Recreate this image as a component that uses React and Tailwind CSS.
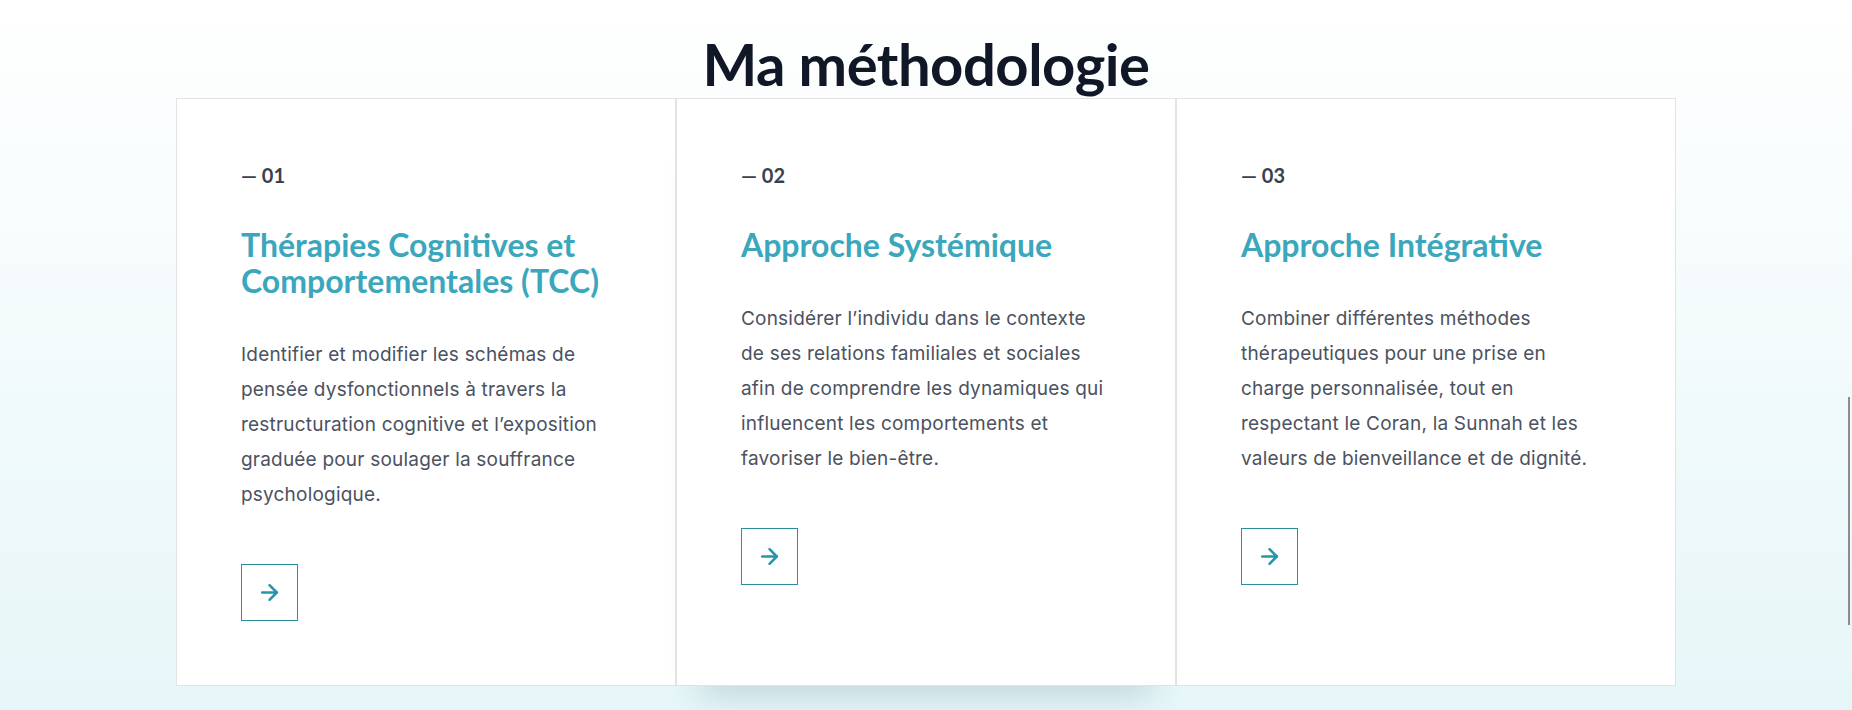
import { ArrowRight } from "lucide-react";

const METHODS = [
  {
    id: "01",
    title: ["Thérapies Cognitives et", "Comportementales (TCC)"],
    lines: [
      "Identifier et modifier les schémas de",
      "pensée dysfonctionnels à travers la",
      "restructuration cognitive et l’exposition",
      "graduée pour soulager la souffrance",
      "psychologique.",
    ],
  },
  {
    id: "02",
    title: ["Approche Systémique"],
    lines: [
      "Considérer l’individu dans le contexte",
      "de ses relations familiales et sociales",
      "afin de comprendre les dynamiques qui",
      "influencent les comportements et",
      "favoriser le bien-être.",
    ],
    raised: true,
  },
  {
    id: "03",
    title: ["Approche Intégrative"],
    lines: [
      "Combiner différentes méthodes",
      "thérapeutiques pour une prise en",
      "charge personnalisée, tout en",
      "respectant le Coran, la Sunnah et les",
      "valeurs de bienveillance et de dignité.",
    ],
  },
];

function MethodCard({ method }) {
  return (
    <div
      className={`bg-white border border-[#e3e3e3] px-16 pt-[62px] pb-16 flex flex-col items-start ${
        method.raised ? "shadow-[0_34px_30px_-24px_rgba(60,110,120,0.22)] relative z-10" : ""
      }`}
    >
      <div className="font-['Lato',sans-serif] font-bold text-[20px] leading-[28px] text-[#374151] mb-[38px]">
        — {method.id}
      </div>
      <h3 className="font-['Lato',sans-serif] font-bold text-[32px] leading-[36px] text-[#3aa7bc] mb-[38px]">
        {method.title.map((t, i) => (
          <span key={i} className="block">
            {t}
          </span>
        ))}
      </h3>
      <p className="font-['Inter',sans-serif] text-[19px] leading-[35px] tracking-[0.2px] text-[#4b5260]">
        {method.lines.map((l, i) => (
          <span key={i} className="block whitespace-nowrap">
            {l}
          </span>
        ))}
      </p>
      <button className="mt-[52px] w-[57px] h-[57px] border border-[#2b8fa0] flex items-center justify-center text-[#2596a8]">
        <ArrowRight size={25} strokeWidth={2.4} />
      </button>
    </div>
  );
}

export default function App() {
  return (
    <div className="relative min-h-[710px] bg-gradient-to-b from-white to-[#e6f6f8] pb-8">
      <div className="pt-[30px] flex flex-col items-center">
        <h2 className="font-['Lato',sans-serif] font-bold text-[58px] leading-[68px] text-[#101828] tracking-[-0.5px]">
          Ma méthodologie
        </h2>
        <div className="grid grid-cols-3 w-[1500px]">
          {METHODS.map((m) => (
            <MethodCard key={m.id} method={m} />
          ))}
        </div>
      </div>
      <div className="absolute right-[2px] top-[397px] w-[2px] h-[228px] bg-[#8c8c8c]" />
    </div>
  );
}
